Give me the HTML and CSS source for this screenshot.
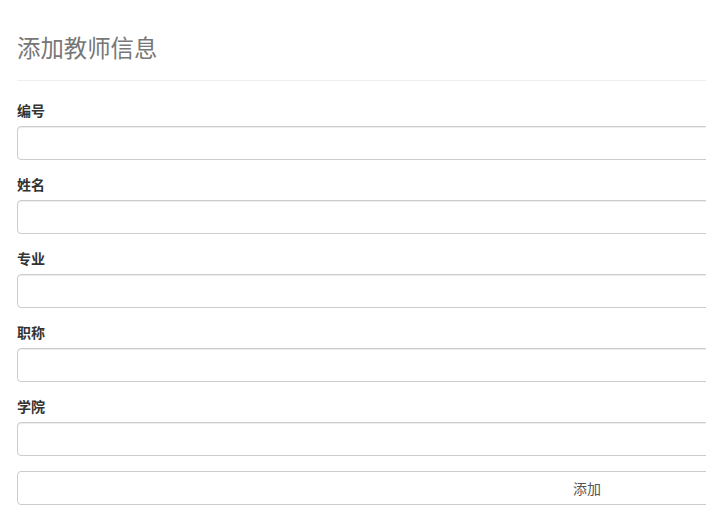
FILE: index.html
```html
<!DOCTYPE html>
<html lang="zh">
<head>
  <meta charset="UTF-8" />
  <title>添加教师信息</title>
  <link rel="stylesheet" href="styles.css">
</head>
<body>

<div class="container">
  <div class="page-header">
    <h3>添加教师信息</h3>
  </div>

  <form class="teacher-form">
    <div class="form-group">
      <label for="tid">编号</label>
      <input type="text" id="tid" class="form-control" />
    </div>
    <div class="form-group">
      <label for="tname">姓名</label>
      <input type="text" id="tname" class="form-control" />
    </div>
    <div class="form-group">
      <label for="major">专业</label>
      <input type="text" id="major" class="form-control" />
    </div>
    <div class="form-group">
      <label for="title">职称</label>
      <input type="text" id="title" class="form-control" />
    </div>
    <div class="form-group">
      <label for="college">学院</label>
      <input type="text" id="college" class="form-control" />
    </div>
    <button type="submit" class="btn">添加</button>
  </form>
</div>

</body>
</html>
```

FILE: styles.css
```css
html, body {
  overflow: hidden;
}
body {
  margin: 0;
  font-family: "Liberation Sans", "Noto Sans CJK SC", sans-serif;
  font-size: 14px;
  line-height: 1.42857;
  color: #333;
  background: #fff;
}
.container {
  width: 1140px;
  padding: 0 17px;
}
.page-header {
  margin: 36px 0 20px;
  padding-bottom: 18px;
  border-bottom: 1px solid #eee;
}
.page-header h3 {
  margin: 0;
  font-size: 23.4px;
  font-weight: normal;
  line-height: 26px;
  color: #777;
}
.form-group {
  margin-bottom: 15px;
}
label {
  display: block;
  padding-top: 1px;
  margin-bottom: 4px;
  font-weight: bold;
  color: #333;
}
.form-control {
  display: block;
  width: 100%;
  height: 34px;
  padding: 6px 12px;
  font-size: 14px;
  border: 1px solid #ccc;
  border-radius: 4px;
  box-shadow: inset 0 1px 1px rgba(0,0,0,0.075);
  box-sizing: border-box;
  background: #fff;
}
.btn {
  display: block;
  width: 100%;
  height: 34px;
  padding: 6px 12px;
  font-family: inherit;
  font-size: 14px;
  color: #555;
  background: #fff;
  border: 1px solid #ccc;
  border-radius: 4px;
  cursor: pointer;
}
.btn:hover {
  background: #e6e6e6;
}
```
